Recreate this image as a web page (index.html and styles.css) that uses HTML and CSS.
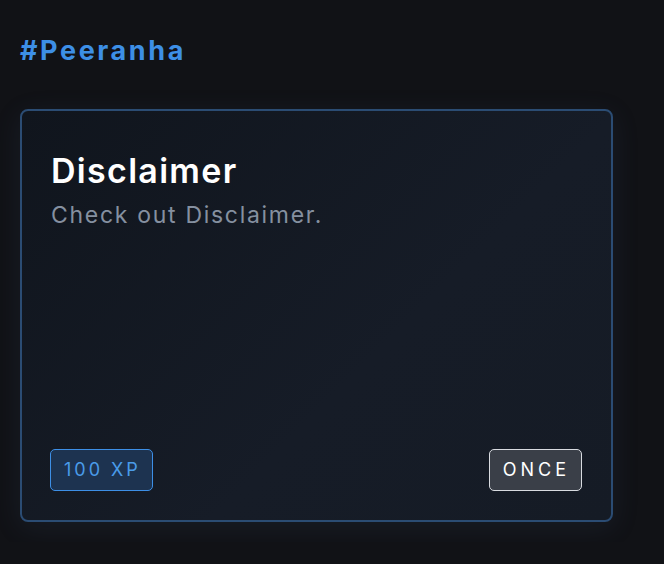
FILE: index.html
```html
<!DOCTYPE html>
<html lang="en">
<head>
    <meta charset="UTF-8">
    <meta name="viewport" content="width=device-width, initial-scale=1.0">
    <title>Peeranha Quests</title>
    <link rel="stylesheet" href="styles.css">
</head>
<body>
    <div class="page">
        <h1 class="channel">#Peeranha</h1>

        <div class="quest-card">
            <div class="quest-info">
                <h2>Disclaimer</h2>
                <p>Check out Disclaimer.</p>
            </div>
            <div class="quest-footer">
                <span class="tag tag-xp">100 XP</span>
                <span class="tag tag-once">ONCE</span>
            </div>
        </div>
    </div>
</body>
</html>
```

FILE: styles.css
```css
body {
    margin: 0;
    background: #111216;
    font-family: Inter, "Open Sans", sans-serif;
    color: #fff;
}
.page {
    padding: 20px;
    max-width: 593px;
}
.channel {
    margin: 0;
    font-size: 27px;
    line-height: 62px;
    font-weight: 700;
    color: #3d8fe6;
    letter-spacing: 2.6px;
}
.quest-card {
    margin-top: 27px;
    height: 413px;
    box-sizing: border-box;
    padding: 29px;
    border: 2px solid #2b4c73;
    border-radius: 8px;
    background: linear-gradient(135deg, #10151d 0%, #161c27 60%, #151b25 100%);
    box-shadow: 0 6px 28px rgba(70, 110, 160, 0.12);
    display: flex;
    flex-direction: column;
    justify-content: space-between;
}
.quest-info h2 {
    margin: 0;
    padding-top: 3px;
    font-size: 34px;
    line-height: 56px;
    font-weight: 600;
    letter-spacing: 1.3px;
}
.quest-info p {
    margin: 0;
    font-size: 23px;
    line-height: 32px;
    color: #8590a0;
    letter-spacing: 1.7px;
}
.quest-footer {
    display: flex;
    justify-content: space-between;
    align-items: center;
}
.tag {
    display: inline-block;
    height: 42px;
    line-height: 40px;
    box-sizing: border-box;
    padding: 0 11px 0 13px;
    border-radius: 5px;
    font-size: 18px;
    letter-spacing: 3px;
}
.tag-xp {
    margin-left: -1px;
    border: 1px solid #3d8fe6;
    background: #1d3350;
    color: #4a9be9;
}
.tag-once {
    border: 1px solid #d8dbe0;
    background: #3a3f48;
    color: #fff;
    letter-spacing: 4px;
}
```
